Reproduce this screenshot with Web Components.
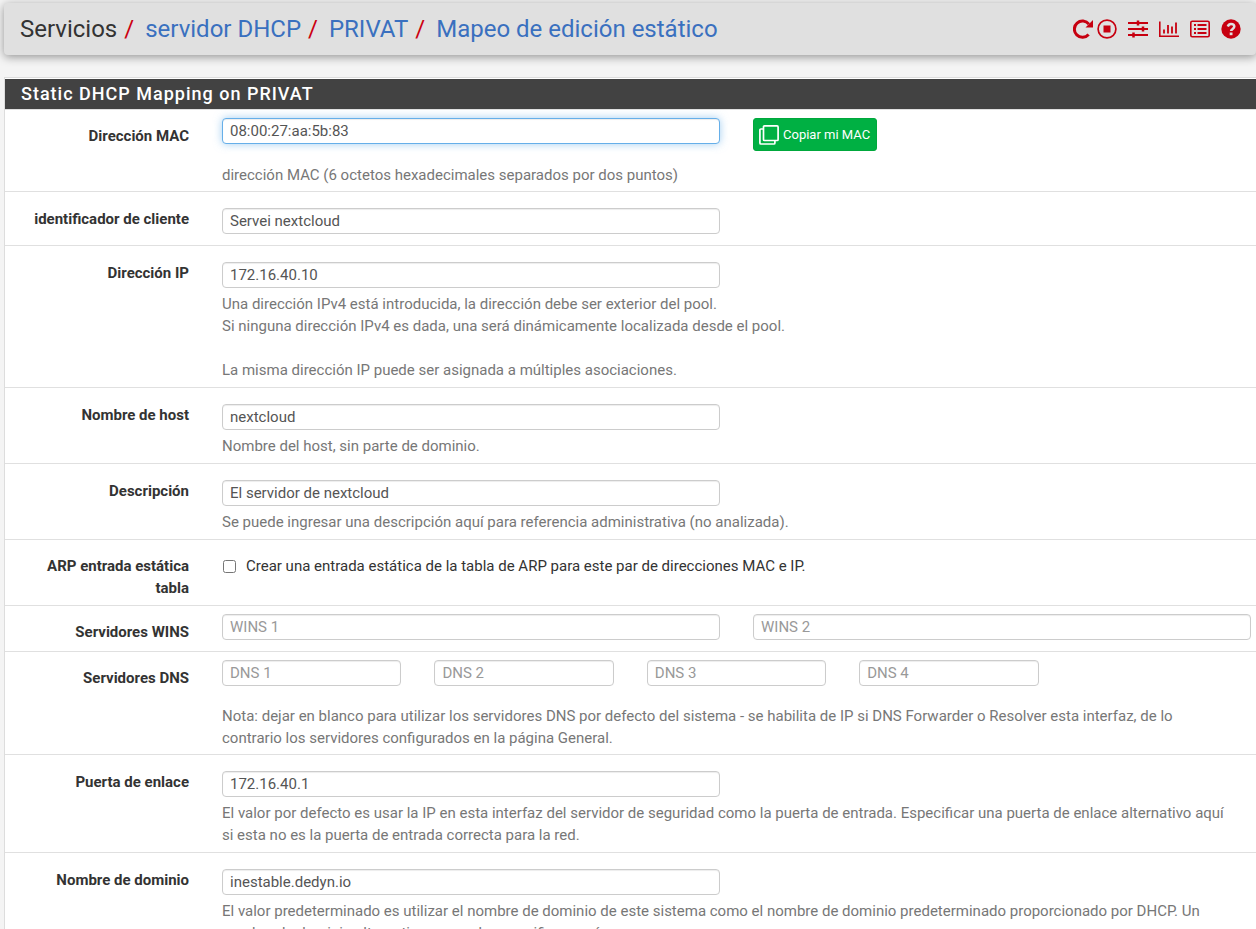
<!DOCTYPE html>
<html lang="es">
<head>
<meta charset="utf-8">
<title>Mapeo de edición estático</title>
<style>
  html { background: #f4f4f4; scrollbar-width: none; }
  body {
    margin: 0;
    padding: 3px 0 24px 4px;
    font: 15px/22px Roboto, sans-serif;
    color: #333;
  }
</style>
</head>
<body>
<page-header>
  <page-crumb>Servicios</page-crumb>
  <page-crumb href="#dhcp">servidor DHCP</page-crumb>
  <page-crumb href="#privat">PRIVAT</page-crumb>
  <page-crumb href="#edit">Mapeo de edición estático</page-crumb>
</page-header>
<main>
  <form-panel heading="Static DHCP Mapping on PRIVAT">
    <form-row label="Dirección MAC" value="08:00:27:aa:5b:83" group active>
      <copy-button slot="extra">Copiar mi MAC</copy-button>
      dirección MAC (6 octetos hexadecimales separados por dos puntos)
    </form-row>
    <form-row label="identificador de cliente" value="Servei nextcloud"></form-row>
    <form-row label="Dirección IP" value="172.16.40.10">Una dirección IPv4 está introducida, la dirección debe ser exterior del pool.<br>Si ninguna dirección IPv4 es dada, una será dinámicamente localizada desde el pool.<br><br>La misma dirección IP puede ser asignada a múltiples asociaciones.</form-row>
    <form-row label="Nombre de host" value="nextcloud">Nombre del host, sin parte de dominio.</form-row>
    <form-row label="Descripción" value="El servidor de nextcloud">Se puede ingresar una descripción aquí para referencia administrativa (no analizada).</form-row>
    <check-row label="ARP entrada estática tabla">Crear una entrada estática de la tabla de ARP para este par de direcciones MAC e IP.</check-row>
    <form-row label="Servidores WINS" placeholders="WINS 1|WINS 2" group></form-row>
    <form-row label="Servidores DNS" placeholders="DNS 1|DNS 2|DNS 3|DNS 4" columns="5" group>Nota: dejar en blanco para utilizar los servidores DNS por defecto del sistema - se habilita de IP si DNS Forwarder o Resolver esta interfaz, de lo contrario los servidores configurados en la página General.</form-row>
    <form-row label="Puerta de enlace" value="172.16.40.1">El valor por defecto es usar la IP en esta interfaz del servidor de seguridad como la puerta de entrada. Especificar una puerta de enlace alternativo aquí si esta no es la puerta de entrada correcta para la red.</form-row>
    <form-row label="Nombre de dominio" value="inestable.dedyn.io">El valor predeterminado es utilizar el nombre de dominio de este sistema como el nombre de dominio predeterminado proporcionado por DHCP. Un nombre de dominio alternativo se puede especificar aquí.</form-row>
  </form-panel>
</main>
<script>
const define = (name, render) => customElements.define(name, class extends HTMLElement {
  connectedCallback() {
    if (this.shadowRoot) return;
    this.attachShadow({ mode: 'open' }).innerHTML = render(this);
  }
});

// Styles shared by every labelled row of the form.
const rowStyles = `
  :host {
    display: grid;
    grid-template-columns: 184px minmax(0, 1fr);
    column-gap: 33px;
    padding-right: 5px;
    border-bottom: 1px solid #e0e0e0;
  }
  .title { padding: 15px 0 6px 16px; text-align: right; font-weight: 700; }
  * { box-sizing: border-box; }
`;

define('page-crumb', el => `
  <style>
    :host { display: flex; gap: 7px; }
    :host(:not(:last-child))::after { content: "/"; color: #cc0011; padding-right: 11px; }
    a { color: #3a70bf; text-decoration: none; }
  </style>
  ${el.hasAttribute('href') ? `<a href="${el.getAttribute('href')}"><slot></slot></a>` : '<span><slot></slot></span>'}
`);

define('page-header', () => `
  <style>
    :host {
      display: flex; align-items: center; justify-content: space-between;
      min-height: 52px; box-sizing: border-box; padding: 0 15px 0 16px;
      background: #e0e0e0; border-radius: 4px;
      box-shadow: 0 2px 10px rgba(0, 0, 0, .4);
    }
    nav { display: flex; font-size: 24px; line-height: 28px; }
    .tools { display: flex; gap: 11px; }
    .pair { display: flex; gap: 4px; }
    a { display: block; height: 20px; color: #c70010; }
    svg { display: block; width: 20px; height: 20px; }
  </style>
  <nav aria-label="Ruta"><slot></slot></nav>
  <div class="tools">
    <span class="pair">
      <a href="#restart" aria-label="Reiniciar"><svg viewBox="0 0 20 20"><path d="M15.6 15.400A8.100 8.100 0 1 1 15.900 5.200" fill="none" stroke="currentColor" stroke-width="3"/><path d="M20 1v7.500h-7.500z" fill="currentColor"/></svg></a>
      <a href="#stop" aria-label="Detener"><svg viewBox="0 0 20 20"><circle cx="10" cy="10" r="8.9" fill="none" stroke="currentColor" stroke-width="1.7"/><path d="M6.500 6.500h7v7h-7z" fill="currentColor"/></svg></a>
    </span>
    <a href="#settings" aria-label="Ajustes"><svg viewBox="0 0 20 20"><path d="M0 4h20M0 10h20M0 16h20" stroke="currentColor" stroke-width="2"/><path d="M10 1.500v5M15 7.500v5M5.500 13.500v5" stroke="currentColor" stroke-width="2.500"/></svg></a>
    <a href="#chart" aria-label="Gráfico"><svg viewBox="0 0 20 20"><path d="M.8 2.500v14.700H20" fill="none" stroke="currentColor" stroke-width="1.600"/><path d="M5 14.500v-4M9 14.500V6M13 14.500V7.500M17 14.500V3.500" stroke="currentColor" stroke-width="1.800"/></svg></a>
    <a href="#log" aria-label="Registro"><svg viewBox="0 0 20 20"><rect x=".8" y="2.300" width="18.400" height="15.400" rx="1.500" fill="none" stroke="currentColor" stroke-width="1.600"/><path d="M4 6h2M4 10h2M4 14h2M7.500 6h9M7.500 10h9M7.500 14h9" stroke="currentColor" stroke-width="1.900"/></svg></a>
    <a href="#help" aria-label="Ayuda"><svg viewBox="0 0 20 20"><circle cx="10" cy="10" r="9.700" fill="currentColor"/><path d="M6.800 7.400C7.500 5.700 8.500 5 10 5c1.900 0 3.300 1 3.300 2.600 0 2.300-3.200 2.300-3.200 4.500" fill="none" stroke="#e0e0e0" stroke-width="2.500"/><path d="M8.700 13.500h2.800v2.700H8.700z" fill="#e0e0e0"/></svg></a>
  </div>
`);

define('form-panel', el => `
  <style>
    :host { display: block; margin-top: 22px; background: #fff; border: 1px solid #ddd; border-right: 0; }
    h2 {
      margin: 1px 0 0; padding: 4px 16px; background: #424242; color: #fff;
      border-bottom: 1px solid #e0e0e0;
      font-size: 18px; line-height: 22px; font-weight: 500; letter-spacing: 1px;
    }
    form { display: block; }
  </style>
  <h2>${el.getAttribute('heading')}</h2>
  <form><slot></slot></form>
`);

define('form-row', el => {
  const label = el.getAttribute('label');
  const hints = (el.getAttribute('placeholders') || '').split('|');
  const hasHelp = [...el.childNodes].some(n => !n.slot && n.textContent.trim());
  const inputs = hints.map((hint, i) => `<input type="text" ${i ? `aria-label="${hint}"` : 'id="field"'}
    placeholder="${hint}" value="${el.getAttribute('value') || ''}">`).join('');
  return `
  <style>
    ${rowStyles}
    .body { padding: 16px 0 6px; }
    .fields {
      display: grid; column-gap: 33px; align-items: start;
      grid-template-columns: repeat(${el.getAttribute('columns') || 2}, minmax(0, 1fr));
      margin-bottom: 5px;
    }
    input {
      width: 100%; height: 26px; padding: 0 7px;
      border: 1px solid #ccc; border-radius: 4px; background: #fff;
      box-shadow: inset 0 1px 1px rgba(0, 0, 0, .075);
      font: inherit; color: #555; outline: 0;
    }
    input::placeholder { color: #999; opacity: 1; }
    :host([active]) input, input:focus {
      border-color: #66afe9;
      box-shadow: inset 0 1px 1px rgba(0, 0, 0, .075), 0 0 8px rgba(102, 175, 233, .6);
    }
    :host(:not([group])) .title { padding-top: 16px; }
    :host([group]) .body { padding: 8px 0 5px; }
    :host([group]) .fields { min-height: 32px; margin-bottom: 0; }
    :host([group]) .help { margin-top: 13px; }
    .help { padding-right: 21px; color: #777; }
  </style>
  <label class="title" for="field">${label}</label>
  <div class="body">
    <div class="fields">${inputs}<slot name="extra"></slot></div>
    ${hasHelp ? '<div class="help"><slot></slot></div>' : ''}
  </div>`;
});

define('check-row', el => `
  <style>
    ${rowStyles}
    .option { display: flex; align-items: flex-start; gap: 9px; padding: 15px 0 6px; }
    input { width: 13px; height: 13px; margin: 5px 1px; }
  </style>
  <label class="title" for="check">${el.getAttribute('label')}</label>
  <label class="option"><input type="checkbox" id="check"><span><slot></slot></span></label>
`);

define('copy-button', () => `
  <style>
    :host { display: block; }
    button {
      display: flex; align-items: center; gap: 4px; height: 33px; padding: 0 6px 0 5px;
      border: 1px solid #00a83c; border-radius: 3px; background: #00b043; color: #fff;
      font: 13px/20px Roboto, sans-serif; white-space: nowrap;
    }
    svg { width: 20px; height: 20px; }
  </style>
  <button type="button"><svg viewBox="0 0 20 20" fill="none" stroke="currentColor" stroke-width="1.700" aria-hidden="true"><rect x="4.500" y=".9" width="14.600" height="14.600" rx="1"/><path d="M4.500 4H1.900a1 1 0 0 0-1 1v13a1 1 0 0 0 1 1h13a1 1 0 0 0 1-1v-2.500"/></svg><slot></slot></button>
`);
</script>
</body>
</html>
